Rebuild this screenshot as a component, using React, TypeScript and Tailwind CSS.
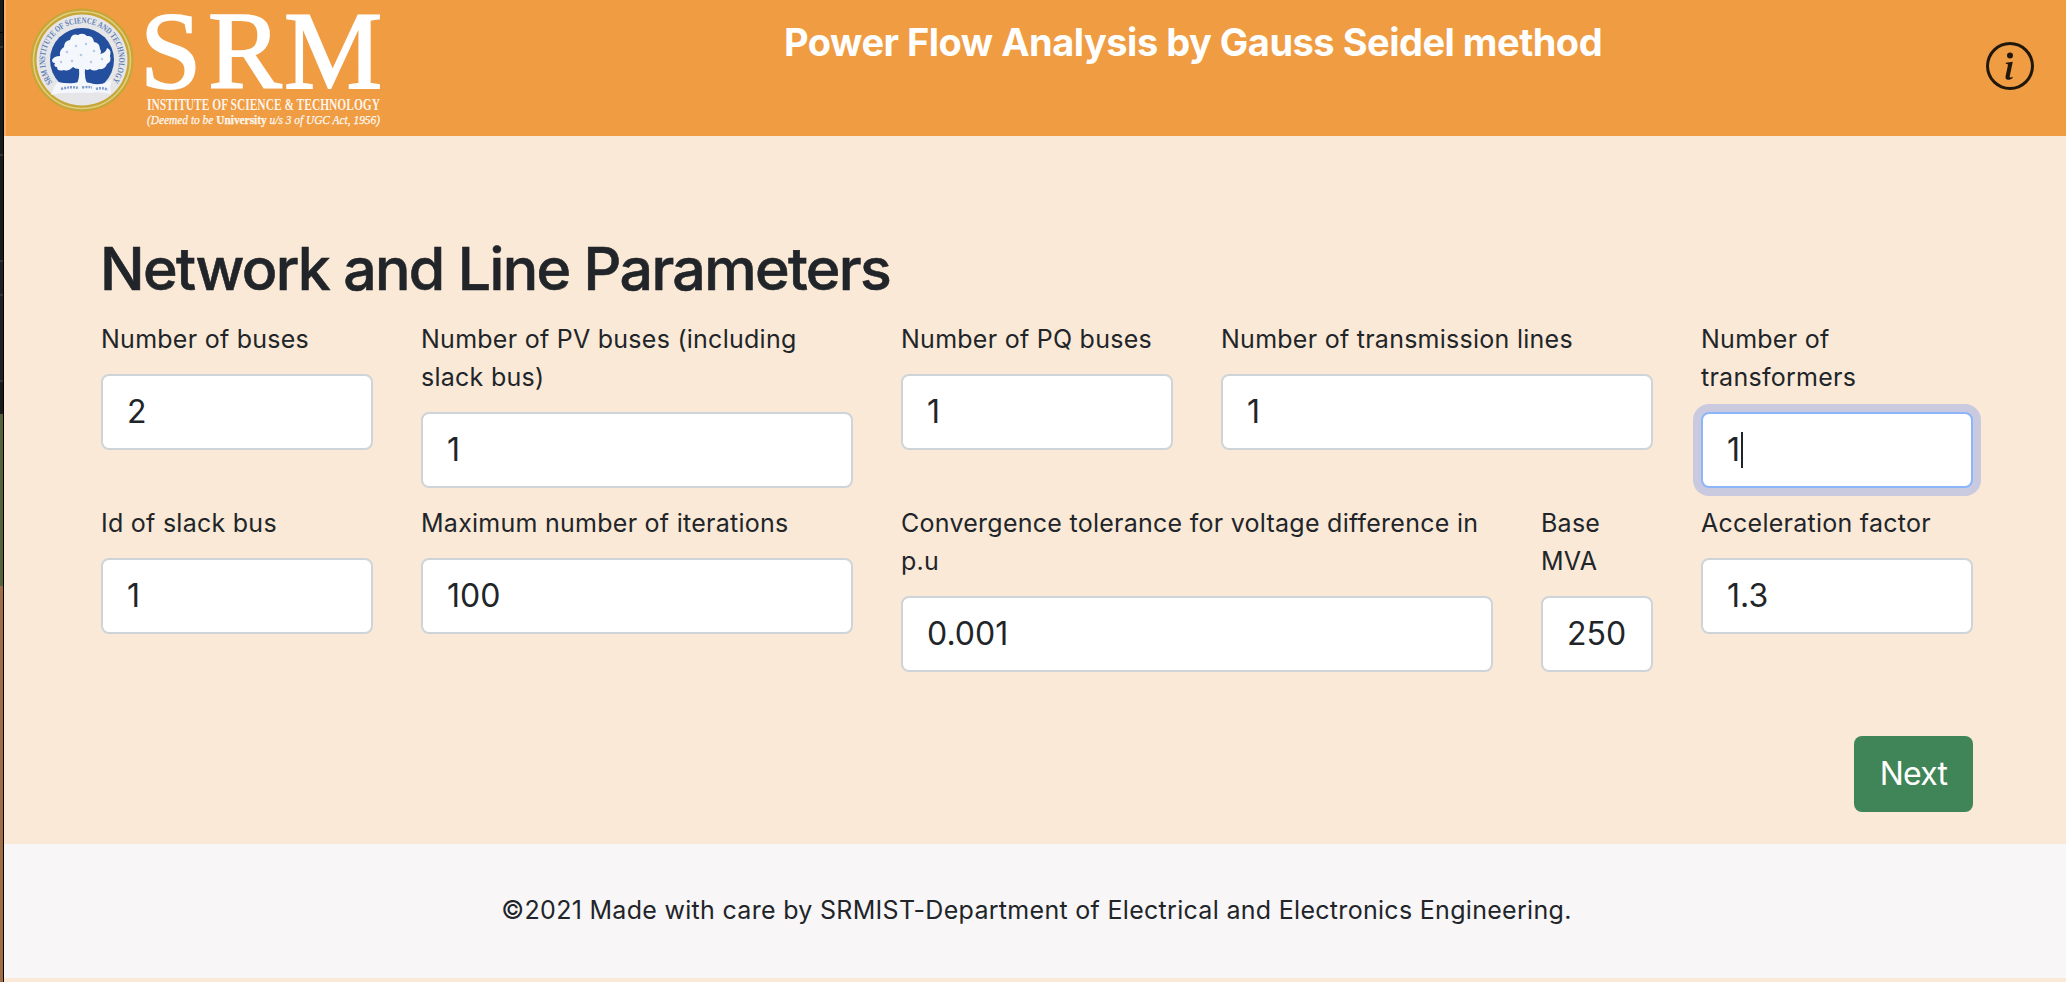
import React from "react";
import { BsInfoCircle } from "react-icons/bs";

type FieldProps = {
  label: string;
  value: string;
  span: string;
  focused?: boolean;
};

function Field({ label, value, span, focused = false }: FieldProps) {
  return (
    <label className={`${span} block`}>
      <span className="mb-4 block text-[25px] leading-[38px] tracking-[0.26px]">{label}</span>
      <span
        className={`flex h-[76px] items-center rounded-lg border-2 bg-white pl-6 text-[32px] leading-[48px] ${
          focused ? "border-[#8bb6fc] ring-8 ring-[#c9cae0]" : "border-[#ced4da]"
        }`}
      >
        {value}
        {focused && <span className="ml-px h-9 w-0.5 bg-[#212529]" />}
      </span>
    </label>
  );
}

function Logo() {
  return (
    <svg width="370" height="136" viewBox="0 0 370 136" fill="#fff" className="ml-[18px] shrink-0 overflow-visible">
      <defs>
        <path id="seal-arc" d="M28.5 82.5 A37 37 0 1 1 87.5 82.5" />
      </defs>
      <circle cx="58" cy="60" r="51.5" fill="#c6a636" />
      <circle cx="58" cy="60" r="48.5" fill="none" stroke="#e0cf80" strokeWidth="1.6" />
      <circle cx="58" cy="60" r="45.5" fill="#e6e6e9" />
      <circle cx="58" cy="60" r="32" fill="#234f9e" />
      <text fontFamily="Liberation Serif, serif" fontWeight="700" fontSize="8.6" fill="#5f80b4">
        <textPath href="#seal-arc" textLength="162" lengthAdjust="spacingAndGlyphs">
          SRM INSTITUTE OF SCIENCE AND TECHNOLOGY
        </textPath>
      </text>
      <g fill="#f4f7fc">
        <path d="M28 60 q2 -4 8 -4 q-1 -6 4 -9 q0 -6 6 -7 q2 -7 8 -5 q5 -3 9 1 q6 -1 7 6 q6 1 6 7 q2 3 0 5 q6 -1 7 -6 q5 2 3 8 q2 5 -3 8 q-2 6 -8 5 q-5 3 -9 0 q-3 2 -5 0 q-1 9 3 16 h-12 q4 -6 3 -16 q-4 0 -6 -2 q-5 5 -9 3 q-7 2 -7 -3 q-4 0 -2 -4 q-3 0 -3 -3z" />
        <path d="M34 82 q9 2 16 1 q8 -2 16 0 q9 3 17 -1 l5 -3 l-2 8 l1 7 q-12 -3 -21 -1 q-9 -1 -18 0 q-10 -1 -21 2 l3 -8z" />
      </g>
      <g fill="#b9c9e6">
        <circle cx="43" cy="52" r="1.3" />
        <circle cx="52" cy="46" r="1.3" />
        <circle cx="62" cy="44" r="1.2" />
        <circle cx="70" cy="51" r="1.3" />
        <circle cx="78" cy="59" r="1.2" />
        <circle cx="57" cy="55" r="1.3" />
        <circle cx="48" cy="61" r="1.3" />
        <circle cx="67" cy="62" r="1.3" />
        <circle cx="37" cy="62" r="1.2" />
      </g>
      <path d="M37 89 q11 -3 17 -1 M58 87.500 q6 -1 10 0 M72 89 q6 -2 12 1" stroke="#7f9bc9" strokeWidth="2.400" strokeDasharray="2 1" fill="none" />
      <text x="116 184 260" y="88" fontFamily="Liberation Serif, serif" fontSize="110.500" stroke="#fff" strokeWidth="1.800">
        SRM
      </text>
      <text x="123" y="109.500" fontFamily="Liberation Serif, serif" fontSize="16.500" fontWeight="700" fillOpacity="0.9" textLength="233" lengthAdjust="spacingAndGlyphs">
        INSTITUTE OF SCIENCE &amp; TECHNOLOGY
      </text>
      <text x="123" y="123.500" fontFamily="Liberation Serif, serif" fontSize="12.500" fontStyle="italic" fillOpacity="0.9" stroke="#fff" strokeWidth="0.250" textLength="233" lengthAdjust="spacingAndGlyphs">
        (Deemed to be <tspan fontStyle="normal" fontWeight="700">University</tspan> u/s 3 of UGC Act, 1956)
      </text>
    </svg>
  );
}

export default function App() {
  return (
    <div className="flex h-[982px] w-full overflow-hidden bg-[#fae9d7] font-['Inter',sans-serif] text-[#212529]">
      <div className="flex w-1 shrink-0 flex-col border-r border-black">
        <div className="h-8 bg-[#1a1a1a]" />
        <div className="h-px bg-black" />
        <div className="h-[13px] bg-[#1a1a1a]" />
        <div className="h-0.5 bg-[#343638]" />
        <div className="h-[106px] bg-[#1a1a1a]" />
        <div className="h-0.5 bg-[#343638]" />
        <div className="h-[104px] bg-[#1a1a1a]" />
        <div className="h-0.5 bg-[#343638]" />
        <div className="h-8 bg-[#1f2022]" />
        <div className="h-0.5 bg-[#343638]" />
        <div className="h-[84px] bg-[#1f2022]" />
        <div className="h-0.5 bg-[#343638]" />
        <div className="h-8 bg-[#1a1a1a]" />
        <div className="h-[172px] bg-[#56633a]" />
        <div className="grow bg-[#a06c45]" />
      </div>
      <div className="flex min-w-0 grow flex-col">
        <header className="flex h-[136px] shrink-0 border-l-2 border-[#f5b06a] bg-[#f09c42]">
          <Logo />
          <h1 className="mt-[18px] ml-[390px] text-[38px] leading-[48px] font-bold tracking-[-0.5px] whitespace-nowrap text-white">
            Power Flow Analysis by Gauss Seidel method
          </h1>
          <div className="flex grow justify-end pt-[42px] pr-8">
            <BsInfoCircle className="size-12 text-[#21180c]" />
          </div>
        </header>
        <main className="h-[708px] shrink-0 pt-[96px] pr-[93px] pl-[97px]">
          <h2 className="-ml-px h-[88px] text-[59px] leading-[73px] font-medium tracking-[-1.65px] whitespace-nowrap [-webkit-text-stroke:0.6px_#212529]">
            Network and Line Parameters
          </h2>
          <form className="grid grid-cols-12 gap-x-12 gap-y-4">
            <Field span="col-span-2" label="Number of buses" value="2" />
            <Field span="col-span-3" label="Number of PV buses (including slack bus)" value="1" />
            <Field span="col-span-2" label="Number of PQ buses" value="1" />
            <Field span="col-span-3" label="Number of transmission lines" value="1" />
            <Field span="col-span-2" label="Number of transformers" value="1" focused />
            <Field span="col-span-2" label="Id of slack bus" value="1" />
            <Field span="col-span-3" label="Maximum number of iterations" value="100" />
            <Field span="col-span-4" label="Convergence tolerance for voltage difference in p.u" value="0.001" />
            <Field span="col-span-1" label="Base MVA" value="250" />
            <Field span="col-span-2" label="Acceleration factor" value="1.3" />
          </form>
          <div className="mt-16 flex justify-end">
            <button className="h-[76px] w-[119px] rounded-lg bg-[#408558] text-[32px] tracking-[-0.8px] text-white">
              Next
            </button>
          </div>
        </main>
        <footer className="flex h-[134px] shrink-0 items-center justify-center bg-[#f8f6f7] pl-[3px] text-[25px] tracking-[0.3px]">
          ©2021 Made with care by SRMIST-Department of Electrical and Electronics Engineering.
        </footer>
      </div>
    </div>
  );
}
